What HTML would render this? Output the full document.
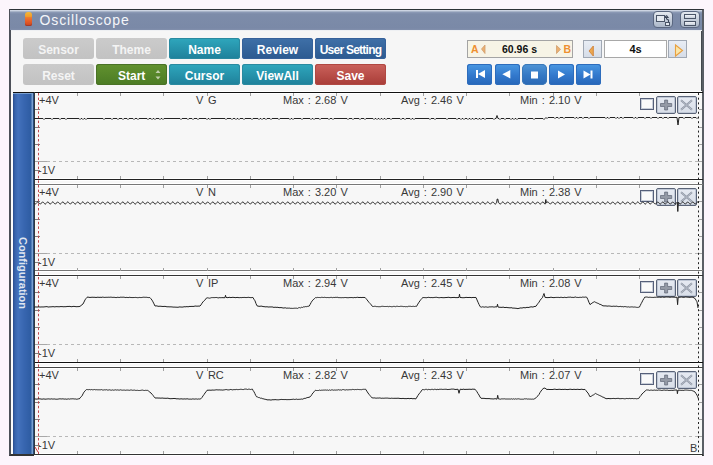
<!DOCTYPE html>
<html><head><meta charset="utf-8">
<style>
html,body{margin:0;padding:0;}
body{width:713px;height:465px;background:#fcf5fc;position:relative;overflow:hidden;font-family:"Liberation Sans",sans-serif;}
.abs{position:absolute;}
#win{position:absolute;left:9px;top:9px;width:695px;height:447px;background:#f6f6f6;box-sizing:border-box;border-top:1px solid #2e3238;border-left:2px solid #4c5058;border-right:2px solid #5a5e66;box-shadow:inset -1px 0 0 #44484e;border-bottom:2px solid #333;}
#title{position:absolute;left:10px;top:10px;width:692px;height:20px;background:linear-gradient(#ccd4e2 0px,#ccd4e2 0.5px,#a8b4c8 1.5px,#8a98b4 2.5px,#7d8ca9 4px,#7a89a7 18px,#8290ac 20px);}
#title .t{position:absolute;left:29.5px;top:2px;font-size:14px;line-height:16px;color:#f4f6fa;letter-spacing:0.9px;}
.btn{position:absolute;width:71px;height:21px;border-radius:3px;color:#fff;font-weight:bold;font-size:12px;line-height:24px;text-align:center;box-sizing:border-box;white-space:nowrap;}
.gray{background:linear-gradient(#cbcbcb,#c2c2c2);color:#f4f4f4;}
.green{background:linear-gradient(#62922f,#4b7b24);box-shadow:inset 0 0 0 1px #4a7226;}
.teal{background:linear-gradient(#2fa7bd,#1e809a);box-shadow:inset 0 0 0 1px #2a8aa0;}
.blue{background:linear-gradient(#3f70a8,#2c5a90);box-shadow:inset 0 0 0 1px #36619a;}
.red{background:linear-gradient(#cb625c,#a83c37);box-shadow:inset 0 0 0 1px #b04842;}
.pb{position:absolute;top:64px;width:25px;height:21px;border-radius:3px;background:linear-gradient(#4a98e2,#3278cc 55%,#2666b8);box-shadow:inset 0 0 0 1px #2d6cbc;}
.pb svg{position:absolute;left:0;top:0;}
.pt{position:absolute;font-size:11px;color:#383838;line-height:13px;white-space:nowrap;word-spacing:1px;}
.cb{position:absolute;left:640px;width:14px;height:12px;box-sizing:border-box;border:1px solid #56607a;background:#fafafa;box-shadow:inset 0 0 0 1px #c8ced8;}
.ib{position:absolute;width:20px;height:18px;box-sizing:border-box;border-radius:2px;border:1px solid #5a6478;background:linear-gradient(#e6eaf2,#d8dee8);box-shadow:inset 0 0 0 1px #c0c8d6;}
.ib svg{position:absolute;left:-1px;top:-1px;}
.hl{position:absolute;left:34px;width:669px;height:1px;}
.wl{position:absolute;left:34px;width:668px;height:1px;background:#fff;}
.sb{position:absolute;width:19px;height:18px;box-sizing:border-box;border:1px solid #a0a8b4;background:linear-gradient(#e8edf5,#d6dde8);}
.sb svg{position:absolute;left:0;top:0;}
.tb{position:absolute;border-radius:4px;border:1px solid #5a6780;box-sizing:border-box;background:linear-gradient(#e4e9f0,#aab6c8);}
</style></head><body>
<div id="win"></div>
<div id="title">
  <div class="abs" style="left:15px;top:6px;width:7px;height:10px;border-radius:1px 1px 2px 2px;background:linear-gradient(#f08830,#e85e28 50%,#c84420);box-shadow:inset 0 -1px 0 #a03a2a;"></div>
  <div class="abs" style="left:15px;top:2px;width:7px;height:5px;border-radius:3px 3px 1px 1px;background:linear-gradient(#f6b838,#f09a28);"></div>
  <div class="t">Oscilloscope</div>
  <div class="tb" style="left:643px;top:1px;width:20px;height:17px;">
    <div class="abs" style="left:2px;top:3px;width:7px;height:5px;border:1px solid #4a5568;background:#e4e9f0;"></div>
    <div class="abs" style="left:11px;top:10px;width:3px;height:2px;border:1px solid #4a5568;background:#e4e9f0;"></div>
    <svg class="abs" style="left:11px;top:3px" width="6" height="7"><path d="M1.5 0.5L0 2.5H3L1.5 0.5M1.5 2.5V3.5Q1.5 4.5 3.5 5V7" stroke="#3a4558" stroke-width="1.1" fill="none"/></svg>
  </div>
  <div class="tb" style="left:670px;top:1px;width:20px;height:17px;">
    <div class="abs" style="left:3px;top:2px;width:10px;height:3px;border:1px solid #4a5568;background:linear-gradient(#f0f3f8,#c8d0dc);"></div>
    <div class="abs" style="left:3px;top:8.5px;width:10px;height:3px;border:1px solid #4a5568;background:linear-gradient(#f0f3f8,#c8d0dc);"></div>
  </div>
</div>
<div class="abs" style="left:11px;top:30px;width:691px;height:1px;background:#eef0f3;"></div>

<div class="btn gray" style="left:23px;top:38px">Sensor</div>
<div class="btn gray" style="left:96px;top:38px">Theme</div>
<div class="btn teal" style="left:169px;top:38px">Name</div>
<div class="btn blue" style="left:242px;top:38px">Review</div>
<div class="btn blue" style="left:315px;top:38px;letter-spacing:-0.75px">User Setting</div>
<div class="btn gray" style="left:23px;top:64px">Reset</div>
<div class="btn green" style="left:96px;top:64px"><span style="position:absolute;left:22px;top:0">Start</span>
  <svg class="abs" style="left:58px;top:4.5px" width="8" height="12"><path d="M1.5 4L4 1L6.5 4ZM1.5 7.5L4 10.5L6.5 7.5Z" fill="#c0ceac"/></svg></div>
<div class="btn teal" style="left:169px;top:64px">Cursor</div>
<div class="btn teal" style="left:242px;top:64px">ViewAll</div>
<div class="btn red" style="left:315px;top:64px">Save</div>

<div class="abs" style="left:467px;top:40px;width:106px;height:18px;box-sizing:border-box;border:1px solid #a4a4a4;background:#f7f4e6;"></div>
<div class="abs" style="left:471px;top:42.5px;font-size:10.5px;line-height:12px;font-weight:bold;color:#ee9030;">A</div>
<svg class="abs" style="left:480px;top:44px" width="7" height="11"><path d="M5 1L1.5 5L5 9.5Z" fill="#ecb070" stroke="#d0a070" stroke-width="0.8"/></svg>
<svg class="abs" style="left:555px;top:44px" width="7" height="11"><path d="M1.5 1.5L5.5 5.3L1.5 9.5Z" fill="#ecb070" stroke="#d0a070" stroke-width="0.8"/></svg>
<div class="abs" style="left:563.5px;top:42.5px;font-size:10.5px;line-height:12px;font-weight:bold;color:#ee9030;">B</div>
<div class="abs" style="left:502px;top:42.5px;font-size:10.5px;line-height:12px;font-weight:bold;color:#111;">60.96 s</div>

<div class="sb" style="left:583px;top:40px;"><svg width="19" height="18"><path d="M9.3 5L5 10L9.3 15Z" fill="#eca850" stroke="#d08038" stroke-width="0.9"/></svg></div>
<div class="abs" style="left:604px;top:40px;width:63px;height:18px;box-sizing:border-box;border:1px solid #a8a8a8;background:#fff;"></div>
<div class="abs" style="left:623px;top:43px;width:25px;text-align:center;font-size:11px;line-height:12px;font-weight:bold;color:#111;">4s</div>
<div class="sb" style="left:668px;top:40px;"><svg width="19" height="18"><path d="M6.5 4L13.5 9.5L6.5 15Z" fill="#fbe6a8" stroke="#e8a040" stroke-width="1.1"/></svg></div>

<div class="pb" style="left:467px"><svg width="26" height="21"><rect x="9" y="6" width="2" height="8" fill="#fff"/><path d="M18 6L11 10L18 14Z" fill="#fff"/></svg></div>
<div class="pb" style="left:495px"><svg width="26" height="21"><path d="M15.3 6L7.3 10.3L15.3 14.5Z" fill="#fff"/></svg></div>
<div class="pb" style="left:522px;border-radius:5px;background:linear-gradient(#4f94d6,#3478c4 55%,#2a68b4);box-shadow:inset 0 0 0 1px #3a78b8;"><svg width="25" height="21"><rect x="9" y="7.5" width="7" height="7" fill="#fff"/></svg></div>
<div class="pb" style="left:549px"><svg width="25" height="21"><path d="M9 6.5L16 10.5L9 14.5Z" fill="#fff"/></svg></div>
<div class="pb" style="left:576px"><svg width="25" height="21"><path d="M7.5 6.5L14.5 10.5L7.5 14.5Z" fill="#fff"/><rect x="14.5" y="6.5" width="2" height="8" fill="#fff"/></svg></div>

<!-- sidebar -->
<div class="abs" style="left:11px;top:93px;width:2px;height:361px;background:#fcfcfc;"></div>
<div class="abs" style="left:13px;top:93px;width:21px;height:361px;background:linear-gradient(90deg,#2a4c8c 0px,#3864ac 2px,#4472bc 5px,#3866b0 11px,#2e5ca2 18px,#7aa0d0 19px,#7aa0d0 20px,#2a4a7a 20px);"></div>
<div class="abs" style="left:13px;top:93px;width:19px;height:1px;background:#7aa0d0;"></div>
<div class="abs" style="left:23px;top:273px;width:0;height:0;">
  <div style="position:absolute;left:-50px;top:-7px;width:100px;text-align:center;transform:rotate(90deg);font-size:11px;font-weight:bold;color:#dfe5f0;line-height:14px;">Configuration</div>
</div>

<!-- chart -->
<div class="abs" style="left:34px;top:92px;width:668px;height:363px;background:#f7f7f7;"></div>
<div class="wl" style="top:91px"></div><div class="wl" style="top:93px"></div><div class="wl" style="top:180px"></div><div class="wl" style="top:178px"></div><div class="wl" style="top:183px"></div><div class="wl" style="top:185px"></div><div class="wl" style="top:271px"></div><div class="wl" style="top:269px"></div><div class="wl" style="top:274px"></div><div class="wl" style="top:276px"></div><div class="wl" style="top:363px"></div><div class="wl" style="top:361px"></div><div class="wl" style="top:366px"></div><div class="wl" style="top:368px"></div><div class="wl" style="top:455px"></div><div class="wl" style="top:453px"></div><div class="hl" style="top:92px;background:#111"></div><div class="hl" style="top:179px;background:#222"></div><div class="hl" style="top:184px;background:#777"></div><div class="hl" style="top:270px;background:#777"></div><div class="hl" style="top:275px;background:#333"></div><div class="hl" style="top:362px;background:#111"></div><div class="hl" style="top:367px;background:#444"></div><div class="hl" style="top:454px;background:#333"></div>
<div class="abs" style="left:13px;top:92px;width:21px;height:1px;background:#111;"></div>
<div class="abs" style="left:34px;top:92px;width:1px;height:363px;background:#303840;"></div>
<svg class="abs" style="left:0;top:0" width="713" height="465">
<line x1="77.5" y1="93" x2="77.5" y2="96" stroke="#a0a0a0"/><line x1="77.5" y1="176" x2="77.5" y2="179" stroke="#a0a0a0"/><line x1="120.5" y1="93" x2="120.5" y2="96" stroke="#a0a0a0"/><line x1="120.5" y1="176" x2="120.5" y2="179" stroke="#a0a0a0"/><line x1="163.5" y1="93" x2="163.5" y2="96" stroke="#a0a0a0"/><line x1="163.5" y1="176" x2="163.5" y2="179" stroke="#a0a0a0"/><line x1="207.5" y1="93" x2="207.5" y2="96" stroke="#a0a0a0"/><line x1="207.5" y1="176" x2="207.5" y2="179" stroke="#a0a0a0"/><line x1="250.5" y1="93" x2="250.5" y2="96" stroke="#a0a0a0"/><line x1="250.5" y1="176" x2="250.5" y2="179" stroke="#a0a0a0"/><line x1="293.5" y1="93" x2="293.5" y2="96" stroke="#a0a0a0"/><line x1="293.5" y1="176" x2="293.5" y2="179" stroke="#a0a0a0"/><line x1="336.5" y1="93" x2="336.5" y2="96" stroke="#a0a0a0"/><line x1="336.5" y1="176" x2="336.5" y2="179" stroke="#a0a0a0"/><line x1="380.5" y1="93" x2="380.5" y2="96" stroke="#a0a0a0"/><line x1="380.5" y1="176" x2="380.5" y2="179" stroke="#a0a0a0"/><line x1="423.5" y1="93" x2="423.5" y2="96" stroke="#a0a0a0"/><line x1="423.5" y1="176" x2="423.5" y2="179" stroke="#a0a0a0"/><line x1="466.5" y1="93" x2="466.5" y2="96" stroke="#a0a0a0"/><line x1="466.5" y1="176" x2="466.5" y2="179" stroke="#a0a0a0"/><line x1="509.5" y1="93" x2="509.5" y2="96" stroke="#a0a0a0"/><line x1="509.5" y1="176" x2="509.5" y2="179" stroke="#a0a0a0"/><line x1="553.5" y1="93" x2="553.5" y2="96" stroke="#a0a0a0"/><line x1="553.5" y1="176" x2="553.5" y2="179" stroke="#a0a0a0"/><line x1="596.5" y1="93" x2="596.5" y2="96" stroke="#a0a0a0"/><line x1="596.5" y1="176" x2="596.5" y2="179" stroke="#a0a0a0"/><line x1="639.5" y1="93" x2="639.5" y2="96" stroke="#a0a0a0"/><line x1="639.5" y1="176" x2="639.5" y2="179" stroke="#a0a0a0"/><line x1="35" y1="109.5" x2="40" y2="109.5" stroke="#808080"/><line x1="699" y1="109.5" x2="702" y2="109.5" stroke="#a0a0a0"/><line x1="35" y1="127.5" x2="40" y2="127.5" stroke="#808080"/><line x1="699" y1="127.5" x2="702" y2="127.5" stroke="#a0a0a0"/><line x1="35" y1="144.5" x2="40" y2="144.5" stroke="#808080"/><line x1="699" y1="144.5" x2="702" y2="144.5" stroke="#a0a0a0"/><line x1="35" y1="170.5" x2="40" y2="170.5" stroke="#808080"/><line x1="35" y1="161.5" x2="47" y2="161.5" stroke="#a8a8a8"/><line x1="47" y1="161.5" x2="698" y2="161.5" stroke="#b8b8b8" stroke-dasharray="3,3"/><line x1="698" y1="161.5" x2="702" y2="161.5" stroke="#a8a8a8"/><line x1="77.5" y1="185" x2="77.5" y2="188" stroke="#a0a0a0"/><line x1="77.5" y1="268" x2="77.5" y2="271" stroke="#a0a0a0"/><line x1="120.5" y1="185" x2="120.5" y2="188" stroke="#a0a0a0"/><line x1="120.5" y1="268" x2="120.5" y2="271" stroke="#a0a0a0"/><line x1="163.5" y1="185" x2="163.5" y2="188" stroke="#a0a0a0"/><line x1="163.5" y1="268" x2="163.5" y2="271" stroke="#a0a0a0"/><line x1="207.5" y1="185" x2="207.5" y2="188" stroke="#a0a0a0"/><line x1="207.5" y1="268" x2="207.5" y2="271" stroke="#a0a0a0"/><line x1="250.5" y1="185" x2="250.5" y2="188" stroke="#a0a0a0"/><line x1="250.5" y1="268" x2="250.5" y2="271" stroke="#a0a0a0"/><line x1="293.5" y1="185" x2="293.5" y2="188" stroke="#a0a0a0"/><line x1="293.5" y1="268" x2="293.5" y2="271" stroke="#a0a0a0"/><line x1="336.5" y1="185" x2="336.5" y2="188" stroke="#a0a0a0"/><line x1="336.5" y1="268" x2="336.5" y2="271" stroke="#a0a0a0"/><line x1="380.5" y1="185" x2="380.5" y2="188" stroke="#a0a0a0"/><line x1="380.5" y1="268" x2="380.5" y2="271" stroke="#a0a0a0"/><line x1="423.5" y1="185" x2="423.5" y2="188" stroke="#a0a0a0"/><line x1="423.5" y1="268" x2="423.5" y2="271" stroke="#a0a0a0"/><line x1="466.5" y1="185" x2="466.5" y2="188" stroke="#a0a0a0"/><line x1="466.5" y1="268" x2="466.5" y2="271" stroke="#a0a0a0"/><line x1="509.5" y1="185" x2="509.5" y2="188" stroke="#a0a0a0"/><line x1="509.5" y1="268" x2="509.5" y2="271" stroke="#a0a0a0"/><line x1="553.5" y1="185" x2="553.5" y2="188" stroke="#a0a0a0"/><line x1="553.5" y1="268" x2="553.5" y2="271" stroke="#a0a0a0"/><line x1="596.5" y1="185" x2="596.5" y2="188" stroke="#a0a0a0"/><line x1="596.5" y1="268" x2="596.5" y2="271" stroke="#a0a0a0"/><line x1="639.5" y1="185" x2="639.5" y2="188" stroke="#a0a0a0"/><line x1="639.5" y1="268" x2="639.5" y2="271" stroke="#a0a0a0"/><line x1="35" y1="201.5" x2="40" y2="201.5" stroke="#808080"/><line x1="699" y1="201.5" x2="702" y2="201.5" stroke="#a0a0a0"/><line x1="35" y1="219.5" x2="40" y2="219.5" stroke="#808080"/><line x1="699" y1="219.5" x2="702" y2="219.5" stroke="#a0a0a0"/><line x1="35" y1="236.5" x2="40" y2="236.5" stroke="#808080"/><line x1="699" y1="236.5" x2="702" y2="236.5" stroke="#a0a0a0"/><line x1="35" y1="262.5" x2="40" y2="262.5" stroke="#808080"/><line x1="35" y1="253.5" x2="47" y2="253.5" stroke="#a8a8a8"/><line x1="47" y1="253.5" x2="698" y2="253.5" stroke="#b8b8b8" stroke-dasharray="3,3"/><line x1="698" y1="253.5" x2="702" y2="253.5" stroke="#a8a8a8"/><line x1="77.5" y1="276" x2="77.5" y2="279" stroke="#a0a0a0"/><line x1="77.5" y1="359" x2="77.5" y2="362" stroke="#a0a0a0"/><line x1="120.5" y1="276" x2="120.5" y2="279" stroke="#a0a0a0"/><line x1="120.5" y1="359" x2="120.5" y2="362" stroke="#a0a0a0"/><line x1="163.5" y1="276" x2="163.5" y2="279" stroke="#a0a0a0"/><line x1="163.5" y1="359" x2="163.5" y2="362" stroke="#a0a0a0"/><line x1="207.5" y1="276" x2="207.5" y2="279" stroke="#a0a0a0"/><line x1="207.5" y1="359" x2="207.5" y2="362" stroke="#a0a0a0"/><line x1="250.5" y1="276" x2="250.5" y2="279" stroke="#a0a0a0"/><line x1="250.5" y1="359" x2="250.5" y2="362" stroke="#a0a0a0"/><line x1="293.5" y1="276" x2="293.5" y2="279" stroke="#a0a0a0"/><line x1="293.5" y1="359" x2="293.5" y2="362" stroke="#a0a0a0"/><line x1="336.5" y1="276" x2="336.5" y2="279" stroke="#a0a0a0"/><line x1="336.5" y1="359" x2="336.5" y2="362" stroke="#a0a0a0"/><line x1="380.5" y1="276" x2="380.5" y2="279" stroke="#a0a0a0"/><line x1="380.5" y1="359" x2="380.5" y2="362" stroke="#a0a0a0"/><line x1="423.5" y1="276" x2="423.5" y2="279" stroke="#a0a0a0"/><line x1="423.5" y1="359" x2="423.5" y2="362" stroke="#a0a0a0"/><line x1="466.5" y1="276" x2="466.5" y2="279" stroke="#a0a0a0"/><line x1="466.5" y1="359" x2="466.5" y2="362" stroke="#a0a0a0"/><line x1="509.5" y1="276" x2="509.5" y2="279" stroke="#a0a0a0"/><line x1="509.5" y1="359" x2="509.5" y2="362" stroke="#a0a0a0"/><line x1="553.5" y1="276" x2="553.5" y2="279" stroke="#a0a0a0"/><line x1="553.5" y1="359" x2="553.5" y2="362" stroke="#a0a0a0"/><line x1="596.5" y1="276" x2="596.5" y2="279" stroke="#a0a0a0"/><line x1="596.5" y1="359" x2="596.5" y2="362" stroke="#a0a0a0"/><line x1="639.5" y1="276" x2="639.5" y2="279" stroke="#a0a0a0"/><line x1="639.5" y1="359" x2="639.5" y2="362" stroke="#a0a0a0"/><line x1="35" y1="292.5" x2="40" y2="292.5" stroke="#808080"/><line x1="699" y1="292.5" x2="702" y2="292.5" stroke="#a0a0a0"/><line x1="35" y1="310.5" x2="40" y2="310.5" stroke="#808080"/><line x1="699" y1="310.5" x2="702" y2="310.5" stroke="#a0a0a0"/><line x1="35" y1="327.5" x2="40" y2="327.5" stroke="#808080"/><line x1="699" y1="327.5" x2="702" y2="327.5" stroke="#a0a0a0"/><line x1="35" y1="353.5" x2="40" y2="353.5" stroke="#808080"/><line x1="35" y1="344.5" x2="47" y2="344.5" stroke="#a8a8a8"/><line x1="47" y1="344.5" x2="698" y2="344.5" stroke="#b8b8b8" stroke-dasharray="3,3"/><line x1="698" y1="344.5" x2="702" y2="344.5" stroke="#a8a8a8"/><line x1="77.5" y1="368" x2="77.5" y2="371" stroke="#a0a0a0"/><line x1="77.5" y1="451" x2="77.5" y2="454" stroke="#a0a0a0"/><line x1="120.5" y1="368" x2="120.5" y2="371" stroke="#a0a0a0"/><line x1="120.5" y1="451" x2="120.5" y2="454" stroke="#a0a0a0"/><line x1="163.5" y1="368" x2="163.5" y2="371" stroke="#a0a0a0"/><line x1="163.5" y1="451" x2="163.5" y2="454" stroke="#a0a0a0"/><line x1="207.5" y1="368" x2="207.5" y2="371" stroke="#a0a0a0"/><line x1="207.5" y1="451" x2="207.5" y2="454" stroke="#a0a0a0"/><line x1="250.5" y1="368" x2="250.5" y2="371" stroke="#a0a0a0"/><line x1="250.5" y1="451" x2="250.5" y2="454" stroke="#a0a0a0"/><line x1="293.5" y1="368" x2="293.5" y2="371" stroke="#a0a0a0"/><line x1="293.5" y1="451" x2="293.5" y2="454" stroke="#a0a0a0"/><line x1="336.5" y1="368" x2="336.5" y2="371" stroke="#a0a0a0"/><line x1="336.5" y1="451" x2="336.5" y2="454" stroke="#a0a0a0"/><line x1="380.5" y1="368" x2="380.5" y2="371" stroke="#a0a0a0"/><line x1="380.5" y1="451" x2="380.5" y2="454" stroke="#a0a0a0"/><line x1="423.5" y1="368" x2="423.5" y2="371" stroke="#a0a0a0"/><line x1="423.5" y1="451" x2="423.5" y2="454" stroke="#a0a0a0"/><line x1="466.5" y1="368" x2="466.5" y2="371" stroke="#a0a0a0"/><line x1="466.5" y1="451" x2="466.5" y2="454" stroke="#a0a0a0"/><line x1="509.5" y1="368" x2="509.5" y2="371" stroke="#a0a0a0"/><line x1="509.5" y1="451" x2="509.5" y2="454" stroke="#a0a0a0"/><line x1="553.5" y1="368" x2="553.5" y2="371" stroke="#a0a0a0"/><line x1="553.5" y1="451" x2="553.5" y2="454" stroke="#a0a0a0"/><line x1="596.5" y1="368" x2="596.5" y2="371" stroke="#a0a0a0"/><line x1="596.5" y1="451" x2="596.5" y2="454" stroke="#a0a0a0"/><line x1="639.5" y1="368" x2="639.5" y2="371" stroke="#a0a0a0"/><line x1="639.5" y1="451" x2="639.5" y2="454" stroke="#a0a0a0"/><line x1="35" y1="384.5" x2="40" y2="384.5" stroke="#808080"/><line x1="699" y1="384.5" x2="702" y2="384.5" stroke="#a0a0a0"/><line x1="35" y1="402.5" x2="40" y2="402.5" stroke="#808080"/><line x1="699" y1="402.5" x2="702" y2="402.5" stroke="#a0a0a0"/><line x1="35" y1="419.5" x2="40" y2="419.5" stroke="#808080"/><line x1="699" y1="419.5" x2="702" y2="419.5" stroke="#a0a0a0"/><line x1="35" y1="445.5" x2="40" y2="445.5" stroke="#808080"/><line x1="35" y1="436.5" x2="47" y2="436.5" stroke="#a8a8a8"/><line x1="47" y1="436.5" x2="698" y2="436.5" stroke="#b8b8b8" stroke-dasharray="3,3"/><line x1="698" y1="436.5" x2="702" y2="436.5" stroke="#a8a8a8"/>
</svg>

<div class="pt" style="top:94px;left:196px;word-spacing:1.5px">V G</div>
<div class="pt" style="top:94px;left:283px">Max : 2.68 V</div>
<div class="pt" style="top:94px;left:401px">Avg : 2.46 V</div>
<div class="pt" style="top:94px;left:520px">Min : 2.10 V</div>
<div class="pt" style="top:94px;left:39px;word-spacing:0">+4V</div>
<div class="pt" style="top:164px;left:38px;word-spacing:0">-1V</div>
<div class="cb" style="top:98px"></div>
<div class="ib" style="top:96px;left:656px"><svg width="20" height="18" viewBox="0 0 20 18"><path d="M8.6 4.1h3v3.4h4.1v3h-4.1v3.5h-3v-3.5h-4.1v-3h4.1z" fill="#949aa6" stroke="#5e6676" stroke-width="0.7"/></svg></div>
<div class="ib" style="top:96px;left:677px"><svg width="20" height="18" viewBox="0 0 20 18"><path d="M4 4.3L15 13.8M15 4.3L4 13.8" stroke="#8a92a0" stroke-width="1.8"/><path d="M4 4.3L15 13.8M15 4.3L4 13.8" stroke="#c4cad4" stroke-width="0.7"/></svg></div>

<div class="pt" style="top:186px;left:196px;word-spacing:1.5px">V N</div>
<div class="pt" style="top:186px;left:283px">Max : 3.20 V</div>
<div class="pt" style="top:186px;left:401px">Avg : 2.90 V</div>
<div class="pt" style="top:186px;left:520px">Min : 2.38 V</div>
<div class="pt" style="top:186px;left:39px;word-spacing:0">+4V</div>
<div class="pt" style="top:256px;left:38px;word-spacing:0">-1V</div>
<div class="cb" style="top:190px"></div>
<div class="ib" style="top:188px;left:656px"><svg width="20" height="18" viewBox="0 0 20 18"><path d="M8.6 4.1h3v3.4h4.1v3h-4.1v3.5h-3v-3.5h-4.1v-3h4.1z" fill="#949aa6" stroke="#5e6676" stroke-width="0.7"/></svg></div>
<div class="ib" style="top:188px;left:677px"><svg width="20" height="18" viewBox="0 0 20 18"><path d="M4 4.3L15 13.8M15 4.3L4 13.8" stroke="#8a92a0" stroke-width="1.8"/><path d="M4 4.3L15 13.8M15 4.3L4 13.8" stroke="#c4cad4" stroke-width="0.7"/></svg></div>

<div class="pt" style="top:277px;left:196px;word-spacing:1.5px">V IP</div>
<div class="pt" style="top:277px;left:283px">Max : 2.94 V</div>
<div class="pt" style="top:277px;left:401px">Avg : 2.45 V</div>
<div class="pt" style="top:277px;left:520px">Min : 2.08 V</div>
<div class="pt" style="top:277px;left:39px;word-spacing:0">+4V</div>
<div class="pt" style="top:347px;left:38px;word-spacing:0">-1V</div>
<div class="cb" style="top:281px"></div>
<div class="ib" style="top:279px;left:656px"><svg width="20" height="18" viewBox="0 0 20 18"><path d="M8.6 4.1h3v3.4h4.1v3h-4.1v3.5h-3v-3.5h-4.1v-3h4.1z" fill="#949aa6" stroke="#5e6676" stroke-width="0.7"/></svg></div>
<div class="ib" style="top:279px;left:677px"><svg width="20" height="18" viewBox="0 0 20 18"><path d="M4 4.3L15 13.8M15 4.3L4 13.8" stroke="#8a92a0" stroke-width="1.8"/><path d="M4 4.3L15 13.8M15 4.3L4 13.8" stroke="#c4cad4" stroke-width="0.7"/></svg></div>

<div class="pt" style="top:369px;left:196px;word-spacing:1.5px">V RC</div>
<div class="pt" style="top:369px;left:283px">Max : 2.82 V</div>
<div class="pt" style="top:369px;left:401px">Avg : 2.43 V</div>
<div class="pt" style="top:369px;left:520px">Min : 2.07 V</div>
<div class="pt" style="top:369px;left:39px;word-spacing:0">+4V</div>
<div class="pt" style="top:439px;left:38px;word-spacing:0">-1V</div>
<div class="cb" style="top:373px"></div>
<div class="ib" style="top:371px;left:656px"><svg width="20" height="18" viewBox="0 0 20 18"><path d="M8.6 4.1h3v3.4h4.1v3h-4.1v3.5h-3v-3.5h-4.1v-3h4.1z" fill="#949aa6" stroke="#5e6676" stroke-width="0.7"/></svg></div>
<div class="ib" style="top:371px;left:677px"><svg width="20" height="18" viewBox="0 0 20 18"><path d="M4 4.3L15 13.8M15 4.3L4 13.8" stroke="#8a92a0" stroke-width="1.8"/><path d="M4 4.3L15 13.8M15 4.3L4 13.8" stroke="#c4cad4" stroke-width="0.7"/></svg></div>

<svg class="abs" style="left:0;top:0" width="713" height="465">
<line x1="38.5" y1="93" x2="38.5" y2="454" stroke="#c04850" stroke-dasharray="2.5,2.1"/>
<line x1="698.5" y1="93" x2="698.5" y2="454" stroke="#222" stroke-dasharray="2,2.7"/>
<path d="M34.0,118.5 L35.0,118.5 L36.0,118.5 L37.0,118.5 L38.0,118.5 L39.0,118.5 L40.0,118.5 L41.0,118.5 L42.0,118.5 L43.0,118.5 L44.0,119.5 L45.0,118.5 L46.0,118.5 L47.0,118.5 L48.0,118.5 L49.0,118.5 L50.0,118.5 L51.0,118.5 L52.0,119.5 L53.0,118.5 L54.0,118.5 L55.0,118.5 L56.0,118.5 L57.0,118.5 L58.0,118.5 L59.0,118.5 L60.0,119.5 L61.0,118.5 L62.0,118.5 L63.0,118.5 L64.0,118.5 L65.0,118.5 L66.0,119.5 L67.0,118.5 L68.0,118.5 L69.0,118.5 L70.0,118.5 L71.0,118.5 L72.0,118.5 L73.0,118.5 L74.0,118.5 L75.0,118.5 L76.0,118.5 L77.0,118.5 L78.0,118.5 L79.0,118.5 L80.0,119.5 L81.0,118.5 L82.0,118.5 L83.0,119.5 L84.0,118.5 L85.0,118.5 L86.0,119.5 L87.0,118.5 L88.0,118.5 L89.0,118.5 L90.0,118.5 L91.0,118.5 L92.0,118.5 L93.0,118.5 L94.0,118.5 L95.0,118.5 L96.0,118.5 L97.0,118.5 L98.0,118.5 L99.0,118.5 L100.0,118.5 L101.0,118.5 L102.0,118.5 L103.0,118.5 L104.0,119.5 L105.0,118.5 L106.0,118.5 L107.0,118.5 L108.0,118.5 L109.0,118.5 L110.0,118.5 L111.0,118.5 L112.0,119.5 L113.0,118.5 L114.0,118.5 L115.0,118.5 L116.0,118.5 L117.0,118.5 L118.0,119.5 L119.0,118.5 L120.0,118.5 L121.0,118.5 L122.0,118.5 L123.0,119.5 L124.0,118.5 L125.0,118.5 L126.0,118.5 L127.0,118.5 L128.0,119.5 L129.0,118.5 L130.0,118.5 L131.0,118.5 L132.0,118.5 L133.0,118.5 L134.0,119.5 L135.0,118.5 L136.0,118.5 L137.0,118.5 L138.0,119.5 L139.0,118.5 L140.0,118.5 L141.0,118.5 L142.0,118.5 L143.0,118.5 L144.0,118.5 L145.0,118.5 L146.0,118.5 L147.0,118.5 L148.0,119.5 L149.0,118.5 L150.0,118.5 L151.0,118.5 L152.0,119.5 L153.0,118.5 L154.0,118.5 L155.0,119.5 L156.0,118.5 L157.0,118.5 L158.0,118.5 L159.0,118.5 L160.0,119.5 L161.0,118.5 L162.0,118.5 L163.0,119.5 L164.0,118.5 L165.0,118.5 L166.0,118.5 L167.0,118.5 L168.0,118.5 L169.0,118.5 L170.0,118.5 L171.0,118.5 L172.0,118.5 L173.0,118.5 L174.0,118.5 L175.0,118.5 L176.0,118.5 L177.0,118.5 L178.0,118.5 L179.0,118.5 L180.0,118.5 L181.0,119.5 L182.0,118.5 L183.0,118.5 L184.0,118.5 L185.0,118.5 L186.0,118.5 L187.0,118.5 L188.0,119.5 L189.0,118.5 L190.0,118.5 L191.0,118.5 L192.0,118.5 L193.0,119.5 L194.0,118.5 L195.0,118.5 L196.0,118.5 L197.0,118.5 L198.0,119.5 L199.0,118.5 L200.0,118.5 L201.0,118.5 L202.0,118.5 L203.0,118.5 L204.0,118.5 L205.0,118.5 L206.0,118.5 L207.0,119.5 L208.0,118.5 L209.0,118.5 L210.0,119.5 L211.0,118.5 L212.0,118.5 L213.0,118.5 L214.0,118.5 L215.0,118.5 L216.0,118.5 L217.0,118.5 L218.0,118.5 L219.0,118.5 L220.0,118.5 L221.0,118.5 L222.0,118.5 L223.0,118.5 L224.0,118.5 L225.0,118.5 L226.0,119.5 L227.0,118.5 L228.0,118.5 L229.0,118.5 L230.0,118.5 L231.0,118.5 L232.0,119.5 L233.0,118.5 L234.0,118.5 L235.0,118.5 L236.0,119.5 L237.0,118.5 L238.0,118.5 L239.0,119.5 L240.0,118.5 L241.0,118.5 L242.0,118.5 L243.0,118.5 L244.0,119.5 L245.0,118.5 L246.0,118.5 L247.0,118.5 L248.0,118.5 L249.0,118.5 L250.0,118.5 L251.0,118.5 L252.0,119.5 L253.0,118.5 L254.0,118.5 L255.0,118.5 L256.0,118.5 L257.0,118.5 L258.0,118.5 L259.0,119.5 L260.0,118.5 L261.0,118.5 L262.0,119.5 L263.0,118.5 L264.0,118.5 L265.0,118.5 L266.0,119.5 L267.0,118.5 L268.0,118.5 L269.0,118.5 L270.0,118.5 L271.0,119.5 L272.0,118.5 L273.0,118.5 L274.0,118.5 L275.0,118.5 L276.0,118.5 L277.0,118.5 L278.0,118.5 L279.0,119.5 L280.0,118.5 L281.0,118.5 L282.0,118.5 L283.0,118.5 L284.0,118.5 L285.0,118.5 L286.0,118.5 L287.0,118.5 L288.0,118.5 L289.0,118.5 L290.0,119.5 L291.0,118.5 L292.0,118.5 L293.0,119.5 L294.0,118.5 L295.0,118.5 L296.0,118.5 L297.0,118.5 L298.0,118.5 L299.0,118.5 L300.0,118.5 L301.0,118.5 L302.0,119.5 L303.0,118.5 L304.0,118.5 L305.0,118.5 L306.0,118.5 L307.0,118.5 L308.0,118.5 L309.0,118.5 L310.0,118.5 L311.0,119.5 L312.0,118.5 L313.0,118.5 L314.0,119.5 L315.0,118.5 L316.0,118.5 L317.0,118.5 L318.0,118.5 L319.0,118.5 L320.0,119.5 L321.0,118.5 L322.0,118.5 L323.0,118.5 L324.0,118.5 L325.0,118.5 L326.0,118.5 L327.0,118.5 L328.0,118.5 L329.0,119.5 L330.0,118.5 L331.0,118.5 L332.0,118.5 L333.0,119.5 L334.0,118.5 L335.0,118.5 L336.0,118.5 L337.0,118.5 L338.0,118.5 L339.0,118.5 L340.0,118.5 L341.0,118.5 L342.0,118.5 L343.0,118.5 L344.0,118.5 L345.0,118.5 L346.0,118.5 L347.0,118.5 L348.0,119.5 L349.0,118.5 L350.0,118.5 L351.0,118.5 L352.0,118.5 L353.0,119.5 L354.0,118.5 L355.0,118.5 L356.0,118.5 L357.0,118.5 L358.0,118.5 L359.0,118.5 L360.0,119.5 L361.0,118.5 L362.0,118.5 L363.0,118.5 L364.0,118.5 L365.0,119.5 L366.0,118.5 L367.0,118.5 L368.0,118.5 L369.0,118.5 L370.0,118.5 L371.0,118.5 L372.0,118.5 L373.0,118.5 L374.0,119.5 L375.0,118.5 L376.0,118.5 L377.0,119.5 L378.0,118.5 L379.0,118.5 L380.0,119.5 L381.0,118.5 L382.0,118.5 L383.0,119.5 L384.0,118.5 L385.0,118.5 L386.0,119.5 L387.0,118.5 L388.0,118.5 L389.0,118.5 L390.0,118.5 L391.0,119.5 L392.0,118.5 L393.0,118.5 L394.0,118.5 L395.0,118.5 L396.0,118.5 L397.0,118.5 L398.0,118.5 L399.0,118.5 L400.0,118.5 L401.0,119.5 L402.0,118.5 L403.0,118.5 L404.0,118.5 L405.0,119.5 L406.0,118.5 L407.0,118.5 L408.0,118.5 L409.0,118.5 L410.0,118.5 L411.0,119.5 L412.0,118.5 L413.0,118.5 L414.0,119.5 L415.0,118.5 L416.0,118.5 L417.0,118.5 L418.0,118.5 L419.0,118.5 L420.0,118.5 L421.0,118.5 L422.0,118.5 L423.0,118.5 L424.0,118.5 L425.0,118.5 L426.0,118.5 L427.0,118.5 L428.0,118.5 L429.0,118.5 L430.0,119.5 L431.0,118.5 L432.0,118.5 L433.0,118.5 L434.0,118.5 L435.0,119.5 L436.0,118.5 L437.0,118.5 L438.0,118.5 L439.0,118.5 L440.0,118.5 L441.0,118.5 L442.0,118.5 L443.0,118.5 L444.0,118.5 L445.0,118.5 L446.0,118.5 L447.0,119.5 L448.0,118.5 L449.0,118.5 L450.0,118.5 L451.0,118.5 L452.0,118.5 L453.0,118.5 L454.0,118.5 L455.0,118.5 L456.0,118.5 L457.0,119.5 L458.0,118.5 L459.0,118.5 L460.0,118.5 L461.0,119.5 L462.0,118.5 L463.0,118.5 L464.0,119.5 L465.0,118.5 L466.0,118.5 L467.0,118.5 L468.0,119.5 L469.0,118.5 L470.0,118.5 L471.0,119.5 L472.0,118.5 L473.0,118.5 L474.0,119.5 L475.0,118.5 L476.0,118.5 L477.0,118.5 L478.0,119.5 L479.0,118.5 L480.0,118.5 L481.0,119.5 L482.0,118.5 L483.0,118.5 L484.0,118.5 L485.0,119.5 L486.0,118.5 L487.0,118.5 L488.0,118.5 L489.0,118.5 L490.0,118.5 L491.0,118.5 L492.0,118.5 L493.0,118.5 L494.0,119.5 L495.0,118.5 L496.0,118.5 L497.0,115.5 L498.0,118.5 L499.0,118.5 L500.0,119.5 L501.0,118.5 L502.0,118.5 L503.0,118.5 L504.0,118.5 L505.0,119.5 L506.0,118.5 L507.0,118.5 L508.0,118.5 L509.0,118.5 L510.0,118.5 L511.0,119.5 L512.0,118.5 L513.0,118.5 L514.0,119.5 L515.0,118.5 L516.0,118.5 L517.0,119.5 L518.0,118.5 L519.0,118.5 L520.0,118.5 L521.0,118.5 L522.0,118.5 L523.0,118.5 L524.0,118.5 L525.0,118.5 L526.0,118.5 L527.0,119.5 L528.0,118.5 L529.0,118.5 L530.0,118.5 L531.0,118.5 L532.0,118.5 L533.0,118.5 L534.0,119.5 L535.0,118.5 L536.0,118.5 L537.0,118.5 L538.0,118.5 L539.0,118.5 L540.0,118.5 L541.0,118.5 L542.0,118.5 L543.0,118.5 L544.0,119.5 L545.0,118.5 L546.0,117.5 L547.0,118.5 L548.0,117.5 L549.0,117.5 L550.0,117.5 L551.0,117.5 L552.0,117.5 L553.0,117.5 L554.0,117.5 L555.0,118.5 L556.0,117.5 L557.0,117.5 L558.0,117.5 L559.0,118.5 L560.0,117.5 L561.0,117.5 L562.0,117.5 L563.0,117.5 L564.0,118.5 L565.0,117.5 L566.0,117.5 L567.0,117.5 L568.0,117.5 L569.0,117.5 L570.0,117.5 L571.0,117.5 L572.0,117.5 L573.0,117.5 L574.0,117.5 L575.0,118.5 L576.0,117.5 L577.0,117.5 L578.0,118.5 L579.0,117.5 L580.0,117.5 L581.0,117.5 L582.0,117.5 L583.0,118.5 L584.0,117.5 L585.0,117.5 L586.0,117.5 L587.0,117.5 L588.0,117.5 L589.0,118.5 L590.0,117.5 L591.0,117.5 L592.0,117.5 L593.0,117.5 L594.0,117.5 L595.0,117.5 L596.0,117.5 L597.0,117.5 L598.0,117.5 L599.0,117.5 L600.0,117.5 L601.0,117.5 L602.0,117.5 L603.0,117.5 L604.0,117.5 L605.0,117.5 L606.0,118.5 L607.0,117.5 L608.0,117.5 L609.0,118.5 L610.0,117.5 L611.0,117.5 L612.0,117.5 L613.0,117.5 L614.0,117.5 L615.0,117.5 L616.0,118.5 L617.0,117.5 L618.0,117.5 L619.0,118.5 L620.0,117.5 L621.0,117.5 L622.0,117.5 L623.0,118.5 L624.0,117.5 L625.0,117.5 L626.0,117.5 L627.0,117.5 L628.0,117.5 L629.0,117.5 L630.0,117.5 L631.0,117.5 L632.0,117.5 L633.0,117.5 L634.0,118.5 L635.0,117.5 L636.0,117.5 L637.0,118.5 L638.0,117.5 L639.0,117.5 L640.0,117.5 L641.0,117.5 L642.0,117.5 L643.0,117.5 L644.0,117.5 L645.0,118.5 L646.0,117.5 L647.0,117.5 L648.0,117.5 L649.0,117.5 L650.0,117.5 L651.0,118.5 L652.0,117.5 L653.0,117.5 L654.0,117.5 L655.0,117.5 L656.0,117.5 L657.0,117.5 L658.0,118.5 L659.0,117.5 L660.0,117.5 L661.0,117.5 L662.0,117.5 L663.0,118.5 L664.0,117.5 L665.0,117.5 L666.0,117.5 L667.0,117.5 L668.0,118.5 L669.0,117.5 L670.0,117.5 L671.0,117.5 L672.0,117.5 L673.0,117.5 L674.0,117.5 L675.0,117.5 L676.0,117.5 L677.0,117.5 L678.0,125.0 L679.0,117.5 L680.0,117.5 L681.0,117.5 L682.0,117.5 L683.0,117.5 L684.0,118.5 L685.0,117.5 L686.0,117.5 L687.0,117.5 L688.0,117.5 L689.0,117.5 L690.0,117.5 L691.0,117.5 L692.0,118.5 L693.0,117.5 L694.0,117.5 L695.0,117.5 L696.0,117.5 L697.0,118.5 L698.0,117.5" fill="none" stroke="#222" stroke-width="1"/><path d="M34.0,203.0 L34.6,203.8 L35.2,204.1 L35.8,203.8 L36.4,203.1 L37.0,202.4 L37.6,201.9 L38.2,202.1 L38.8,202.7 L39.4,203.5 L40.0,204.0 L40.6,204.0 L41.2,203.4 L41.8,202.6 L42.4,202.0 L43.0,202.0 L43.6,202.5 L44.2,203.3 L44.8,203.9 L45.4,204.1 L46.0,203.6 L46.6,202.9 L47.2,202.2 L47.8,201.9 L48.4,202.2 L49.0,203.0 L49.6,203.8 L50.2,204.1 L50.8,203.8 L51.4,203.1 L52.0,202.4 L52.6,201.9 L53.2,202.1 L53.8,202.7 L54.4,203.5 L55.0,204.0 L55.6,204.0 L56.2,203.4 L56.8,202.6 L57.4,202.0 L58.0,202.0 L58.6,202.5 L59.2,203.3 L59.8,203.9 L60.4,204.1 L61.0,203.6 L61.6,202.9 L62.2,202.2 L62.8,201.9 L63.4,202.2 L64.0,203.0 L64.6,203.8 L65.2,204.1 L65.8,203.8 L66.4,203.1 L67.0,202.4 L67.6,201.9 L68.2,202.1 L68.8,202.7 L69.4,203.5 L70.0,204.0 L70.6,204.0 L71.2,203.4 L71.8,202.6 L72.4,202.0 L73.0,202.0 L73.6,202.5 L74.2,203.3 L74.8,203.9 L75.4,204.1 L76.0,203.6 L76.6,202.9 L77.2,202.2 L77.8,201.9 L78.4,202.2 L79.0,203.0 L79.6,203.8 L80.2,204.1 L80.8,203.8 L81.4,203.1 L82.0,202.4 L82.6,201.9 L83.2,202.1 L83.8,202.7 L84.4,203.5 L85.0,204.0 L85.6,204.0 L86.2,203.4 L86.8,202.6 L87.4,202.0 L88.0,202.0 L88.6,202.5 L89.2,203.3 L89.8,203.9 L90.4,204.1 L91.0,203.6 L91.6,202.9 L92.2,202.2 L92.8,201.9 L93.4,202.2 L94.0,203.0 L94.6,203.8 L95.2,204.1 L95.8,203.8 L96.4,203.1 L97.0,202.4 L97.6,201.9 L98.2,202.1 L98.8,202.7 L99.4,203.5 L100.0,204.0 L100.6,204.0 L101.2,203.4 L101.8,202.6 L102.4,202.0 L103.0,202.0 L103.6,202.5 L104.2,203.3 L104.8,203.9 L105.4,204.1 L106.0,203.6 L106.6,202.9 L107.2,202.2 L107.8,201.9 L108.4,202.2 L109.0,203.0 L109.6,203.8 L110.2,204.1 L110.8,203.8 L111.4,203.1 L112.0,202.4 L112.6,201.9 L113.2,202.1 L113.8,202.7 L114.4,203.5 L115.0,204.0 L115.6,204.0 L116.2,203.4 L116.8,202.6 L117.4,202.0 L118.0,202.0 L118.6,202.5 L119.2,203.3 L119.8,203.9 L120.4,204.1 L121.0,203.6 L121.6,202.9 L122.2,202.2 L122.8,201.9 L123.4,202.2 L124.0,203.0 L124.6,203.8 L125.2,204.1 L125.8,203.8 L126.4,203.1 L127.0,202.4 L127.6,201.9 L128.2,202.1 L128.8,202.7 L129.4,203.5 L130.0,204.0 L130.6,204.0 L131.2,203.4 L131.8,202.6 L132.4,202.0 L133.0,202.0 L133.6,202.5 L134.2,203.3 L134.8,203.9 L135.4,204.1 L136.0,203.6 L136.6,202.9 L137.2,202.2 L137.8,201.9 L138.4,202.2 L139.0,203.0 L139.6,203.8 L140.2,204.1 L140.8,203.8 L141.4,203.1 L142.0,202.4 L142.6,201.9 L143.2,202.1 L143.8,202.7 L144.4,203.5 L145.0,204.0 L145.6,204.0 L146.2,203.4 L146.8,202.6 L147.4,202.0 L148.0,202.0 L148.6,202.5 L149.2,203.3 L149.8,203.9 L150.4,204.1 L151.0,203.6 L151.6,202.9 L152.2,202.2 L152.8,201.9 L153.4,202.2 L154.0,203.0 L154.6,203.8 L155.2,204.1 L155.8,203.8 L156.4,203.1 L157.0,202.4 L157.6,201.9 L158.2,202.1 L158.8,202.7 L159.4,203.5 L160.0,204.0 L160.6,204.0 L161.2,203.4 L161.8,202.6 L162.4,202.0 L163.0,202.0 L163.6,202.5 L164.2,203.3 L164.8,203.9 L165.4,204.1 L166.0,203.6 L166.6,202.9 L167.2,202.2 L167.8,201.9 L168.4,202.2 L169.0,203.0 L169.6,203.8 L170.2,204.1 L170.8,203.8 L171.4,203.1 L172.0,202.4 L172.6,201.9 L173.2,202.1 L173.8,202.7 L174.4,203.5 L175.0,204.0 L175.6,204.0 L176.2,203.4 L176.8,202.6 L177.4,202.0 L178.0,202.0 L178.6,202.5 L179.2,203.3 L179.8,203.9 L180.4,204.1 L181.0,203.6 L181.6,202.9 L182.2,202.2 L182.8,201.9 L183.4,202.2 L184.0,203.0 L184.6,203.8 L185.2,204.1 L185.8,203.8 L186.4,203.1 L187.0,202.4 L187.6,201.9 L188.2,202.1 L188.8,202.7 L189.4,203.5 L190.0,204.0 L190.6,204.0 L191.2,203.4 L191.8,202.6 L192.4,202.0 L193.0,202.0 L193.6,202.5 L194.2,203.3 L194.8,203.9 L195.4,204.1 L196.0,203.6 L196.6,202.9 L197.2,202.2 L197.8,201.9 L198.4,202.2 L199.0,203.0 L199.6,203.8 L200.2,204.1 L200.8,203.8 L201.4,203.1 L202.0,202.4 L202.6,201.9 L203.2,202.1 L203.8,202.7 L204.4,203.5 L205.0,204.0 L205.6,204.0 L206.2,203.4 L206.8,202.6 L207.4,202.0 L208.0,202.0 L208.6,202.5 L209.2,203.3 L209.8,203.9 L210.4,204.1 L211.0,203.6 L211.6,202.9 L212.2,202.2 L212.8,201.9 L213.4,202.2 L214.0,203.0 L214.6,203.8 L215.2,204.1 L215.8,203.8 L216.4,203.1 L217.0,202.4 L217.6,201.9 L218.2,202.1 L218.8,202.7 L219.4,203.5 L220.0,204.0 L220.6,204.0 L221.2,203.4 L221.8,202.6 L222.4,202.0 L223.0,202.0 L223.6,202.5 L224.2,203.3 L224.8,203.9 L225.4,204.1 L226.0,203.6 L226.6,202.9 L227.2,202.2 L227.8,201.9 L228.4,202.2 L229.0,203.0 L229.6,203.8 L230.2,204.1 L230.8,203.8 L231.4,203.1 L232.0,202.4 L232.6,201.9 L233.2,202.1 L233.8,202.7 L234.4,203.5 L235.0,204.0 L235.6,204.0 L236.2,203.4 L236.8,202.6 L237.4,202.0 L238.0,202.0 L238.6,202.5 L239.2,203.3 L239.8,203.9 L240.4,204.1 L241.0,203.6 L241.6,202.9 L242.2,202.2 L242.8,201.9 L243.4,202.2 L244.0,203.0 L244.6,203.8 L245.2,204.1 L245.8,203.8 L246.4,203.1 L247.0,202.4 L247.6,201.9 L248.2,202.1 L248.8,202.7 L249.4,203.5 L250.0,204.0 L250.6,204.0 L251.2,203.4 L251.8,202.6 L252.4,202.0 L253.0,202.0 L253.6,202.5 L254.2,203.3 L254.8,203.9 L255.4,204.1 L256.0,203.6 L256.6,202.9 L257.2,202.2 L257.8,201.9 L258.4,202.2 L259.0,203.0 L259.6,203.8 L260.2,204.1 L260.8,203.8 L261.4,203.1 L262.0,202.4 L262.6,201.9 L263.2,202.1 L263.8,202.7 L264.4,203.5 L265.0,204.0 L265.6,204.0 L266.2,203.4 L266.8,202.6 L267.4,202.0 L268.0,202.0 L268.6,202.5 L269.2,203.3 L269.8,203.9 L270.4,204.1 L271.0,203.6 L271.6,202.9 L272.2,202.2 L272.8,201.9 L273.4,202.2 L274.0,203.0 L274.6,203.8 L275.2,204.1 L275.8,203.8 L276.4,203.1 L277.0,202.4 L277.6,201.9 L278.2,202.1 L278.8,202.7 L279.4,203.5 L280.0,204.0 L280.6,204.0 L281.2,203.4 L281.8,202.6 L282.4,202.0 L283.0,202.0 L283.6,202.5 L284.2,203.3 L284.8,203.9 L285.4,204.1 L286.0,203.6 L286.6,202.9 L287.2,202.2 L287.8,201.9 L288.4,202.2 L289.0,203.0 L289.6,203.8 L290.2,204.1 L290.8,203.8 L291.4,203.1 L292.0,202.4 L292.6,201.9 L293.2,202.1 L293.8,202.7 L294.4,203.5 L295.0,204.0 L295.6,204.0 L296.2,203.4 L296.8,202.6 L297.4,202.0 L298.0,202.0 L298.6,202.5 L299.2,203.3 L299.8,203.9 L300.4,204.1 L301.0,203.6 L301.6,202.9 L302.2,202.2 L302.8,201.9 L303.4,202.2 L304.0,203.0 L304.6,203.8 L305.2,204.1 L305.8,203.8 L306.4,203.1 L307.0,202.4 L307.6,201.9 L308.2,202.1 L308.8,202.7 L309.4,203.5 L310.0,204.0 L310.6,204.0 L311.2,203.4 L311.8,202.6 L312.4,202.0 L313.0,202.0 L313.6,202.5 L314.2,203.3 L314.8,203.9 L315.4,204.1 L316.0,203.6 L316.6,202.9 L317.2,202.2 L317.8,201.9 L318.4,202.2 L319.0,203.0 L319.6,203.8 L320.2,204.1 L320.8,203.8 L321.4,203.1 L322.0,202.4 L322.6,201.9 L323.2,202.1 L323.8,202.7 L324.4,203.5 L325.0,204.0 L325.6,204.0 L326.2,203.4 L326.8,202.6 L327.4,202.0 L328.0,202.0 L328.6,202.5 L329.2,203.3 L329.8,203.9 L330.4,204.1 L331.0,203.6 L331.6,202.9 L332.2,202.2 L332.8,201.9 L333.4,202.2 L334.0,203.0 L334.6,203.8 L335.2,204.1 L335.8,203.8 L336.4,203.1 L337.0,202.4 L337.6,201.9 L338.2,202.1 L338.8,202.7 L339.4,203.5 L340.0,204.0 L340.6,204.0 L341.2,203.4 L341.8,202.6 L342.4,202.0 L343.0,202.0 L343.6,202.5 L344.2,203.3 L344.8,203.9 L345.4,204.1 L346.0,203.6 L346.6,202.9 L347.2,202.2 L347.8,201.9 L348.4,202.2 L349.0,203.0 L349.6,203.8 L350.2,204.1 L350.8,203.8 L351.4,203.1 L352.0,202.4 L352.6,201.9 L353.2,202.1 L353.8,202.7 L354.4,203.5 L355.0,204.0 L355.6,204.0 L356.2,203.4 L356.8,202.6 L357.4,202.0 L358.0,202.0 L358.6,202.5 L359.2,203.3 L359.8,203.9 L360.4,204.1 L361.0,203.6 L361.6,202.9 L362.2,202.2 L362.8,201.9 L363.4,202.2 L364.0,203.0 L364.6,203.8 L365.2,204.1 L365.8,203.8 L366.4,203.1 L367.0,202.4 L367.6,201.9 L368.2,202.1 L368.8,202.7 L369.4,203.5 L370.0,204.0 L370.6,204.0 L371.2,203.4 L371.8,202.6 L372.4,202.0 L373.0,202.0 L373.6,202.5 L374.2,203.3 L374.8,203.9 L375.4,204.1 L376.0,203.6 L376.6,202.9 L377.2,202.2 L377.8,201.9 L378.4,202.2 L379.0,203.0 L379.6,203.8 L380.2,204.1 L380.8,203.8 L381.4,203.1 L382.0,202.4 L382.6,201.9 L383.2,202.1 L383.8,202.7 L384.4,203.5 L385.0,204.0 L385.6,204.0 L386.2,203.4 L386.8,202.6 L387.4,202.0 L388.0,202.0 L388.6,202.5 L389.2,203.3 L389.8,203.9 L390.4,204.1 L391.0,203.6 L391.6,202.9 L392.2,202.2 L392.8,201.9 L393.4,202.2 L394.0,203.0 L394.6,203.8 L395.2,204.1 L395.8,203.8 L396.4,203.1 L397.0,202.4 L397.6,201.9 L398.2,202.1 L398.8,202.7 L399.4,203.5 L400.0,204.0 L400.6,204.0 L401.2,203.4 L401.8,202.6 L402.4,202.0 L403.0,202.0 L403.6,202.5 L404.2,203.3 L404.8,203.9 L405.4,204.1 L406.0,203.6 L406.6,202.9 L407.2,202.2 L407.8,201.9 L408.4,202.2 L409.0,203.0 L409.6,203.8 L410.2,204.1 L410.8,203.8 L411.4,203.1 L412.0,202.4 L412.6,201.9 L413.2,202.1 L413.8,202.7 L414.4,203.5 L415.0,204.0 L415.6,204.0 L416.2,203.4 L416.8,202.6 L417.4,202.0 L418.0,202.0 L418.6,202.5 L419.2,203.3 L419.8,203.9 L420.4,204.1 L421.0,203.6 L421.6,202.9 L422.2,202.2 L422.8,201.9 L423.4,202.2 L424.0,203.0 L424.6,203.8 L425.2,204.1 L425.8,203.8 L426.4,203.1 L427.0,202.4 L427.6,201.9 L428.2,202.1 L428.8,202.7 L429.4,203.5 L430.0,204.0 L430.6,204.0 L431.2,203.4 L431.8,202.6 L432.4,202.0 L433.0,202.0 L433.6,202.5 L434.2,203.3 L434.8,203.9 L435.4,204.1 L436.0,203.6 L436.6,202.9 L437.2,202.2 L437.8,201.9 L438.4,202.2 L439.0,203.0 L439.6,203.8 L440.2,204.1 L440.8,203.8 L441.4,203.1 L442.0,202.4 L442.6,201.9 L443.2,202.1 L443.8,202.7 L444.4,203.5 L445.0,204.0 L445.6,204.0 L446.2,203.4 L446.8,202.6 L447.4,202.0 L448.0,202.0 L448.6,202.5 L449.2,203.3 L449.8,203.9 L450.4,204.1 L451.0,203.6 L451.6,202.9 L452.2,202.2 L452.8,201.9 L453.4,202.2 L454.0,203.0 L454.6,203.8 L455.2,204.1 L455.8,203.8 L456.4,203.1 L457.0,202.4 L457.6,201.9 L458.2,202.1 L458.8,202.7 L459.4,203.5 L460.0,204.0 L460.6,204.0 L461.2,203.4 L461.8,202.6 L462.4,202.0 L463.0,202.0 L463.6,202.5 L464.2,203.3 L464.8,203.9 L465.4,204.1 L466.0,203.6 L466.6,202.9 L467.2,202.2 L467.8,201.9 L468.4,202.2 L469.0,203.0 L469.6,203.8 L470.2,204.1 L470.8,203.8 L471.4,203.1 L472.0,202.4 L472.6,201.9 L473.2,202.1 L473.8,202.7 L474.4,203.5 L475.0,204.0 L475.6,204.0 L476.2,203.4 L476.8,202.6 L477.4,202.0 L478.0,202.0 L478.6,202.5 L479.2,203.3 L479.8,203.9 L480.4,204.1 L481.0,203.6 L481.6,202.9 L482.2,202.2 L482.8,201.9 L483.4,202.2 L484.0,203.0 L484.6,203.8 L485.2,204.1 L485.8,203.8 L486.4,203.1 L487.0,202.4 L487.6,201.9 L488.2,202.1 L488.8,202.7 L489.4,203.5 L490.0,204.0 L490.6,204.0 L491.2,203.4 L491.8,202.6 L492.4,202.0 L493.0,202.0 L493.6,202.5 L494.2,203.3 L494.8,203.9 L495.4,204.1 L496.0,203.6 L496.6,202.9 L497.2,199.0 L497.8,199.0 L498.4,202.2 L499.0,203.0 L499.6,203.8 L500.2,204.1 L500.8,203.8 L501.4,203.1 L502.0,202.4 L502.6,201.9 L503.2,202.1 L503.8,202.7 L504.4,203.5 L505.0,204.0 L505.6,204.0 L506.2,203.4 L506.8,202.6 L507.4,202.0 L508.0,202.0 L508.6,202.5 L509.2,203.3 L509.8,203.9 L510.4,204.1 L511.0,203.6 L511.6,202.9 L512.2,202.2 L512.8,201.9 L513.4,202.2 L514.0,203.0 L514.6,203.8 L515.2,204.1 L515.8,203.8 L516.4,203.1 L517.0,202.4 L517.6,201.9 L518.2,202.1 L518.8,202.7 L519.4,203.5 L520.0,204.0 L520.6,204.0 L521.2,203.4 L521.8,202.6 L522.4,202.0 L523.0,202.0 L523.6,202.5 L524.2,203.3 L524.8,203.9 L525.4,204.1 L526.0,203.6 L526.6,202.9 L527.2,202.2 L527.8,201.9 L528.4,202.2 L529.0,203.0 L529.6,203.8 L530.2,204.1 L530.8,203.8 L531.4,203.1 L532.0,202.4 L532.6,201.9 L533.2,202.1 L533.8,202.7 L534.4,203.5 L535.0,204.0 L535.6,204.0 L536.2,203.4 L536.8,202.6 L537.4,202.0 L538.0,202.0 L538.6,202.5 L539.2,203.3 L539.8,203.9 L540.4,204.1 L541.0,203.6 L541.6,202.9 L542.2,202.2 L542.8,201.9 L543.4,202.2 L544.0,203.0 L544.6,203.8 L545.2,204.1 L545.8,199.5 L546.4,203.1 L547.0,202.4 L547.6,201.9 L548.2,202.1 L548.8,202.7 L549.4,203.5 L550.0,204.0 L550.6,204.0 L551.2,203.4 L551.8,202.6 L552.4,202.0 L553.0,202.0 L553.6,202.5 L554.2,203.3 L554.8,203.9 L555.4,204.1 L556.0,203.6 L556.6,202.9 L557.2,202.2 L557.8,201.9 L558.4,202.2 L559.0,203.0 L559.6,203.8 L560.2,204.1 L560.8,203.8 L561.4,203.1 L562.0,202.4 L562.6,201.9 L563.2,202.1 L563.8,202.7 L564.4,203.5 L565.0,204.0 L565.6,204.0 L566.2,203.4 L566.8,202.6 L567.4,202.0 L568.0,202.0 L568.6,202.5 L569.2,203.3 L569.8,203.9 L570.4,204.1 L571.0,203.6 L571.6,202.9 L572.2,202.2 L572.8,201.9 L573.4,202.2 L574.0,203.0 L574.6,203.8 L575.2,204.1 L575.8,203.8 L576.4,203.1 L577.0,202.4 L577.6,201.9 L578.2,202.1 L578.8,202.7 L579.4,203.5 L580.0,204.0 L580.6,204.0 L581.2,203.4 L581.8,202.6 L582.4,202.0 L583.0,202.0 L583.6,202.5 L584.2,203.3 L584.8,203.9 L585.4,204.1 L586.0,203.6 L586.6,202.9 L587.2,202.2 L587.8,201.9 L588.4,202.2 L589.0,203.0 L589.6,203.8 L590.2,204.1 L590.8,203.8 L591.4,203.1 L592.0,202.4 L592.6,201.9 L593.2,202.1 L593.8,202.7 L594.4,203.5 L595.0,204.0 L595.6,204.0 L596.2,203.4 L596.8,202.6 L597.4,202.0 L598.0,202.0 L598.6,202.5 L599.2,203.3 L599.8,203.9 L600.4,204.1 L601.0,203.6 L601.6,202.9 L602.2,202.2 L602.8,201.9 L603.4,202.2 L604.0,203.0 L604.6,203.8 L605.2,204.1 L605.8,203.8 L606.4,203.1 L607.0,202.4 L607.6,201.9 L608.2,202.1 L608.8,202.7 L609.4,203.5 L610.0,204.0 L610.6,204.0 L611.2,203.4 L611.8,202.6 L612.4,202.0 L613.0,202.0 L613.6,202.5 L614.2,203.3 L614.8,203.9 L615.4,204.1 L616.0,203.6 L616.6,202.9 L617.2,202.2 L617.8,201.9 L618.4,202.2 L619.0,203.0 L619.6,203.8 L620.2,204.1 L620.8,203.8 L621.4,203.1 L622.0,202.4 L622.6,201.9 L623.2,202.1 L623.8,202.7 L624.4,203.5 L625.0,204.0 L625.6,204.0 L626.2,203.4 L626.8,202.6 L627.4,202.0 L628.0,202.0 L628.6,202.5 L629.2,203.3 L629.8,203.9 L630.4,204.1 L631.0,203.6 L631.6,202.9 L632.2,202.2 L632.8,201.9 L633.4,202.2 L634.0,203.0 L634.6,203.8 L635.2,204.1 L635.8,203.8 L636.4,203.1 L637.0,202.4 L637.6,201.9 L638.2,202.1 L638.8,202.7 L639.4,203.5 L640.0,204.0 L640.6,204.0 L641.2,203.4 L641.8,202.6 L642.4,202.0 L643.0,202.0 L643.6,202.5 L644.2,203.3 L644.8,203.9 L645.4,204.1 L646.0,203.6 L646.6,202.9 L647.2,202.2 L647.8,201.9 L648.4,202.2 L649.0,203.0 L649.6,203.8 L650.2,204.1 L650.8,203.8 L651.4,203.1 L652.0,202.4 L652.6,201.9 L653.2,202.1 L653.8,202.7 L654.4,203.5 L655.0,204.0 L655.6,204.0 L656.2,203.4 L656.8,202.6 L657.4,202.0 L658.0,202.0 L658.6,202.5 L659.2,203.3 L659.8,203.9 L660.4,204.1 L661.0,203.6 L661.6,202.9 L662.2,202.2 L662.8,201.9 L663.4,202.2 L664.0,203.0 L664.6,203.8 L665.2,204.1 L665.8,203.8 L666.4,203.1 L667.0,202.4 L667.6,201.9 L668.2,202.1 L668.8,202.7 L669.4,203.5 L670.0,204.0 L670.6,204.0 L671.2,203.4 L671.8,202.6 L672.4,202.0 L673.0,202.0 L673.6,202.5 L674.2,203.3 L674.8,203.9 L675.4,204.1 L676.0,203.6 L676.6,202.9 L677.2,202.2 L677.8,211.5 L678.4,202.2 L679.0,203.0 L679.6,203.8 L680.2,204.1 L680.8,203.8 L681.4,203.1 L682.0,202.4 L682.6,201.9 L683.2,202.1 L683.8,202.7 L684.4,203.5 L685.0,204.0 L685.6,204.0 L686.2,203.4 L686.8,202.6 L687.4,202.0 L688.0,202.0 L688.6,202.5 L689.2,203.3 L689.8,203.9 L690.4,204.1 L691.0,203.6 L691.6,202.9 L692.2,202.2 L692.8,201.9 L693.4,202.2 L694.0,203.0 L694.6,203.8 L695.2,204.1 L695.8,203.8 L696.4,203.1 L697.0,202.4 L697.6,201.9 L698.2,202.1 L698.8,202.7" fill="none" stroke="#222" stroke-width="1"/><path d="M34.0,307.2 L35.0,307.1 L36.0,306.8 L37.0,307.2 L38.0,306.8 L39.0,306.9 L40.0,307.0 L41.0,307.0 L42.0,306.9 L43.0,307.0 L44.0,306.9 L45.0,306.8 L46.0,306.7 L47.0,306.6 L48.0,307.0 L49.0,307.0 L50.0,306.8 L51.0,306.9 L52.0,306.7 L53.0,306.7 L54.0,306.7 L55.0,307.0 L56.0,306.5 L57.0,306.8 L58.0,306.6 L59.0,306.9 L60.0,306.6 L61.0,306.6 L62.0,306.6 L63.0,306.7 L64.0,306.8 L65.0,306.6 L66.0,306.8 L67.0,306.4 L68.0,306.5 L69.0,306.4 L70.0,306.4 L71.0,306.7 L72.0,306.7 L73.0,306.4 L74.0,306.4 L75.0,306.5 L76.0,306.7 L77.0,306.7 L78.0,306.6 L79.0,306.6 L80.0,306.3 L81.0,305.6 L82.0,304.7 L83.0,304.0 L84.0,302.0 L85.0,299.9 L86.0,298.5 L87.0,297.3 L88.0,297.0 L89.0,297.4 L90.0,297.4 L91.0,297.4 L92.0,297.2 L93.0,297.3 L94.0,297.3 L95.0,297.3 L96.0,297.5 L97.0,297.3 L98.0,297.2 L99.0,297.4 L100.0,297.3 L101.0,297.3 L102.0,297.4 L102.9,297.0 L103.9,297.4 L104.9,297.4 L105.9,297.3 L106.9,297.3 L107.9,297.3 L108.9,297.2 L109.9,297.3 L110.9,297.1 L111.9,297.3 L112.9,297.4 L113.9,297.3 L114.9,297.4 L115.9,297.6 L116.9,297.5 L117.9,297.2 L118.9,297.5 L119.9,297.4 L120.9,297.1 L121.9,297.3 L122.9,297.2 L123.9,297.2 L124.9,297.4 L125.9,297.6 L126.9,297.3 L127.9,297.6 L128.9,297.5 L129.9,297.2 L130.9,297.6 L131.9,297.5 L132.9,297.6 L133.9,297.5 L134.8,297.5 L135.8,297.4 L136.8,297.6 L137.8,297.7 L138.8,297.6 L139.8,297.4 L140.8,297.6 L141.8,297.5 L142.8,297.3 L143.8,297.2 L144.8,297.3 L145.8,297.3 L146.8,297.3 L147.8,297.5 L148.8,297.6 L149.8,297.5 L150.9,298.7 L152.0,300.1 L153.0,301.9 L154.0,303.9 L155.0,306.0 L156.0,305.9 L157.0,305.9 L158.0,306.3 L159.0,306.3 L160.0,306.2 L161.0,306.3 L162.0,306.4 L163.0,306.5 L164.0,306.4 L165.0,306.4 L166.0,306.5 L167.0,306.9 L168.0,306.7 L169.0,306.9 L170.0,306.8 L171.0,306.9 L172.0,306.9 L173.0,307.1 L174.0,307.1 L175.0,307.1 L176.0,307.2 L177.0,307.2 L178.0,307.3 L179.0,307.0 L180.0,306.9 L181.0,307.1 L182.0,307.0 L183.0,307.1 L184.0,306.7 L185.0,306.8 L186.0,306.8 L187.0,306.5 L188.0,306.9 L189.0,306.5 L190.0,306.4 L191.0,306.5 L192.0,306.3 L193.0,306.5 L194.0,306.3 L195.0,306.1 L196.0,306.0 L197.0,306.3 L198.0,306.0 L199.0,306.2 L200.0,306.0 L201.0,304.9 L202.0,303.2 L203.0,301.9 L203.9,300.9 L204.8,300.2 L205.7,299.1 L206.6,297.9 L207.6,297.8 L208.6,298.0 L209.7,298.2 L210.7,297.9 L211.7,297.6 L212.7,297.6 L213.8,297.6 L214.8,297.6 L215.8,297.5 L216.8,297.5 L217.8,297.8 L218.9,297.9 L219.9,297.5 L220.9,297.8 L221.9,297.6 L223.0,297.7 L224.0,297.7 L225.0,297.7 L225.5,295.3 L226.0,297.4 L227.0,297.6 L228.0,297.7 L229.0,297.3 L230.0,297.4 L231.0,297.7 L232.0,297.3 L233.0,297.4 L234.0,297.4 L235.0,297.6 L236.0,297.7 L237.0,297.3 L238.0,297.6 L239.0,297.6 L239.9,297.7 L240.9,297.5 L241.9,297.7 L242.9,297.4 L243.9,297.5 L244.9,297.4 L245.9,297.6 L246.9,297.5 L247.9,297.4 L248.9,297.3 L249.9,297.6 L250.9,297.6 L251.9,297.6 L252.9,297.4 L253.9,299.2 L255.0,300.8 L256.0,303.6 L257.0,305.8 L258.0,306.1 L259.0,306.3 L260.0,306.3 L261.0,306.1 L262.0,306.2 L263.0,306.6 L264.0,306.6 L265.0,306.8 L266.0,306.9 L267.0,306.7 L268.0,307.0 L269.0,307.0 L270.0,306.9 L271.0,307.0 L272.0,306.9 L273.0,307.1 L274.0,307.5 L275.0,307.1 L276.0,307.4 L277.0,307.3 L278.0,307.3 L279.0,307.7 L280.0,307.6 L281.0,307.6 L282.0,307.7 L283.0,308.0 L284.0,308.0 L285.0,307.8 L285.9,307.9 L286.9,308.3 L287.9,308.0 L288.8,308.2 L289.8,308.1 L290.8,308.4 L291.8,308.3 L292.7,308.4 L293.7,308.3 L294.7,308.2 L295.6,308.2 L296.6,308.2 L297.6,308.4 L298.5,307.8 L299.5,307.6 L300.5,307.9 L301.4,307.3 L302.4,307.5 L303.4,306.9 L304.4,306.9 L305.3,306.6 L306.3,306.7 L307.3,306.4 L308.2,306.3 L309.2,306.1 L310.1,304.5 L311.1,302.6 L312.0,301.1 L312.9,300.1 L313.8,299.1 L314.7,298.5 L315.6,297.5 L316.6,297.7 L317.6,297.4 L318.6,297.5 L319.6,297.5 L320.6,297.6 L321.6,297.3 L322.7,297.4 L323.7,297.5 L324.7,297.3 L325.7,297.5 L326.7,297.6 L327.7,297.5 L328.7,297.6 L329.7,297.6 L330.7,297.4 L331.7,297.4 L332.7,297.7 L333.7,297.4 L334.8,297.5 L335.8,297.3 L336.8,297.4 L337.8,297.3 L338.8,297.7 L339.8,297.6 L340.8,297.7 L341.8,297.7 L342.8,297.6 L343.8,297.7 L344.8,297.5 L345.8,297.5 L346.9,297.7 L347.9,297.7 L348.9,297.7 L349.9,297.5 L350.9,297.6 L351.9,297.5 L352.9,297.7 L353.9,297.7 L354.9,297.4 L355.9,297.7 L356.9,297.3 L357.9,297.3 L359.0,297.6 L360.0,297.4 L361.0,297.5 L362.0,297.6 L363.0,297.3 L364.0,297.6 L365.0,297.4 L366.0,298.6 L367.0,299.8 L368.0,301.1 L369.1,302.5 L370.2,303.6 L371.3,304.9 L372.4,306.4 L373.4,306.5 L374.4,306.3 L375.4,306.3 L376.4,306.6 L377.4,306.6 L378.4,306.7 L379.4,306.7 L380.4,306.7 L381.4,306.4 L382.4,306.3 L383.4,306.4 L384.4,306.5 L385.4,306.5 L386.4,306.5 L387.4,306.4 L388.4,306.7 L389.4,306.4 L390.4,306.5 L391.4,306.7 L392.4,306.7 L393.4,306.4 L394.4,306.4 L395.5,306.7 L396.5,306.3 L397.5,306.3 L398.5,306.5 L399.5,306.5 L400.5,306.3 L401.5,306.3 L402.5,306.4 L403.5,306.6 L404.5,306.5 L405.5,306.7 L406.5,306.6 L407.5,306.7 L408.5,306.3 L409.5,306.3 L410.5,306.3 L411.5,306.5 L412.5,306.4 L413.5,306.3 L414.5,306.5 L415.5,306.3 L416.5,306.4 L417.8,304.1 L419.0,302.2 L420.0,300.8 L420.9,299.6 L421.9,298.4 L422.9,297.5 L423.9,297.6 L424.9,297.6 L425.9,297.7 L426.9,297.7 L427.9,297.4 L428.9,297.3 L429.9,297.6 L430.9,297.6 L431.9,297.5 L432.9,297.7 L433.9,297.5 L434.9,297.4 L435.9,297.3 L436.9,297.3 L437.9,297.6 L438.9,297.7 L439.9,297.7 L440.9,297.5 L442.0,297.6 L443.0,297.7 L444.0,297.7 L445.0,297.6 L446.0,297.5 L447.0,297.5 L448.0,297.3 L449.0,297.3 L450.0,297.6 L451.0,297.7 L452.0,297.5 L453.0,297.5 L454.0,297.4 L455.0,297.5 L456.0,297.7 L457.0,297.5 L458.0,297.7 L459.0,297.3 L459.5,294.2 L460.0,297.5 L461.0,297.5 L462.0,297.7 L463.0,297.7 L464.0,297.7 L465.0,297.6 L466.0,297.3 L467.0,297.5 L468.0,297.5 L469.0,297.5 L470.0,297.4 L471.0,297.6 L472.0,297.7 L473.0,297.3 L474.0,297.6 L475.0,297.4 L476.0,297.5 L477.0,299.9 L478.0,302.2 L479.1,304.6 L480.3,306.8 L481.3,307.2 L482.3,306.8 L483.2,306.9 L484.2,307.2 L485.2,306.9 L486.2,306.9 L487.2,307.2 L488.2,307.2 L489.1,306.9 L490.1,306.9 L491.1,306.9 L492.1,306.8 L493.1,306.9 L494.1,307.2 L495.0,306.8 L496.0,306.9 L497.0,306.8 L497.5,304.2 L498.0,307.0 L499.0,307.2 L500.0,307.3 L501.0,307.3 L502.0,307.4 L503.0,307.1 L504.0,307.3 L505.0,307.7 L506.0,307.3 L507.0,307.5 L508.0,307.7 L509.0,307.7 L510.0,307.9 L511.0,307.7 L512.0,307.8 L513.0,308.3 L514.0,307.9 L515.0,308.4 L516.0,308.1 L517.0,308.6 L518.0,308.5 L519.0,308.4 L520.0,308.0 L521.0,307.9 L522.0,308.1 L523.0,307.7 L524.0,307.6 L525.0,307.8 L526.0,307.7 L527.0,307.2 L528.0,307.6 L529.0,307.3 L530.0,307.1 L531.0,306.8 L532.0,306.9 L533.0,307.1 L534.0,306.6 L535.0,306.4 L536.0,306.3 L537.0,304.8 L538.0,303.4 L539.0,302.2 L540.1,300.3 L541.3,298.8 L542.4,297.7 L543.2,295.6 L544.0,293.5 L545.0,297.4 L546.0,297.4 L547.0,297.7 L548.0,297.5 L549.0,297.6 L550.0,297.4 L551.0,297.2 L552.0,297.4 L553.0,297.6 L554.0,297.6 L555.0,297.5 L555.9,297.4 L556.9,297.4 L557.9,297.4 L558.9,297.4 L559.9,297.6 L560.9,297.2 L561.9,297.4 L562.9,297.6 L563.9,297.5 L564.9,297.2 L565.9,297.6 L566.9,297.5 L567.9,297.2 L568.9,297.2 L569.9,297.2 L570.9,297.1 L571.9,297.5 L572.9,297.3 L573.9,297.5 L574.9,297.1 L575.9,297.0 L576.8,297.5 L577.8,297.4 L578.8,297.5 L579.8,297.3 L580.8,297.3 L581.8,297.4 L582.8,297.0 L583.8,297.2 L584.8,297.2 L585.8,297.0 L586.8,297.3 L587.9,299.6 L588.9,302.2 L590.0,304.6 L591.1,303.8 L592.1,303.0 L593.2,302.4 L594.3,301.7 L595.3,302.2 L596.2,302.6 L597.2,303.1 L598.2,303.3 L599.1,304.1 L600.1,304.3 L601.1,304.7 L602.0,305.3 L603.0,305.9 L604.0,305.8 L605.0,306.0 L606.0,305.8 L607.0,306.2 L608.1,306.0 L609.1,306.0 L610.1,306.1 L611.1,306.3 L612.1,306.4 L613.1,306.2 L614.1,306.2 L615.1,306.4 L616.1,306.1 L617.2,306.3 L618.2,306.6 L619.2,306.6 L620.2,306.3 L621.2,306.7 L622.2,306.5 L623.2,306.9 L624.2,306.6 L625.2,306.6 L626.3,306.8 L627.3,307.0 L628.3,306.8 L629.3,307.1 L630.3,307.0 L631.3,306.9 L632.3,306.9 L633.3,307.1 L634.3,307.0 L635.4,307.1 L636.4,307.3 L637.4,307.4 L638.4,307.3 L639.4,307.1 L640.3,305.4 L641.1,303.7 L642.0,302.1 L642.9,300.2 L643.9,298.6 L644.8,297.1 L645.8,297.1 L646.8,297.0 L647.8,297.2 L648.8,297.4 L649.8,297.2 L650.8,297.3 L651.8,297.4 L652.8,297.4 L653.9,297.4 L654.9,297.2 L655.9,297.3 L656.9,297.0 L657.9,297.4 L658.9,297.1 L659.9,297.2 L660.9,297.4 L661.9,297.1 L662.9,297.0 L663.9,297.4 L664.9,297.2 L665.9,297.0 L666.9,297.0 L667.9,297.1 L669.0,297.0 L670.0,297.4 L671.0,297.0 L672.0,297.1 L673.0,297.1 L674.0,297.2 L675.0,297.2 L676.0,297.3 L677.0,297.3 L677.6,304.7 L678.2,297.0 L679.2,297.4 L680.2,297.3 L681.2,297.0 L682.1,297.2 L683.1,297.3 L684.1,297.4 L685.1,297.0 L686.1,297.0 L687.1,297.2 L688.1,297.2 L689.1,297.4 L690.0,297.4 L691.0,297.1 L692.0,297.2 L693.0,297.2 L694.0,298.0 L695.0,298.4 L696.0,300.2 L697.0,301.8 L698.0,308.0" fill="none" stroke="#222" stroke-width="1"/><path d="M34.0,399.1 L35.0,398.8 L36.0,399.2 L37.0,399.0 L38.0,399.0 L39.0,398.8 L40.0,398.9 L41.0,399.0 L42.0,399.2 L43.0,399.0 L44.0,398.9 L45.0,399.2 L46.1,399.1 L47.1,399.0 L48.1,398.9 L49.1,398.9 L50.1,399.2 L51.1,398.8 L52.1,399.0 L53.1,399.1 L54.1,398.9 L55.1,399.1 L56.1,399.2 L57.1,399.2 L58.1,399.1 L59.1,398.9 L60.1,398.8 L61.1,399.0 L62.1,398.9 L63.1,398.8 L64.1,399.2 L65.1,398.9 L66.1,399.2 L67.1,399.2 L68.2,398.8 L69.2,399.2 L70.2,398.9 L71.2,398.9 L72.2,398.8 L73.2,398.8 L74.2,399.0 L75.2,398.9 L76.2,399.2 L77.2,399.2 L78.2,398.8 L79.2,399.0 L80.1,397.9 L81.1,396.8 L82.0,395.9 L83.0,393.9 L84.0,392.1 L84.9,391.1 L85.7,390.2 L86.6,389.5 L87.6,389.6 L88.6,389.7 L89.6,389.5 L90.6,389.8 L91.6,389.5 L92.6,389.8 L93.6,389.7 L94.6,389.5 L95.6,389.8 L96.6,389.7 L97.6,389.8 L98.6,389.8 L99.6,389.8 L100.6,389.8 L101.6,389.6 L102.6,390.0 L103.6,390.0 L104.6,389.8 L105.6,389.9 L106.6,389.7 L107.6,390.1 L108.6,390.0 L109.6,389.8 L110.6,390.1 L111.6,390.2 L112.6,389.9 L113.6,390.2 L114.6,390.0 L115.6,389.8 L116.6,390.1 L117.6,389.9 L118.6,390.1 L119.6,390.1 L120.6,389.8 L121.6,390.1 L122.6,390.2 L123.6,390.1 L124.6,390.1 L125.6,390.3 L126.6,390.1 L127.6,390.1 L128.6,390.2 L129.6,390.3 L130.6,390.0 L131.6,390.0 L132.6,390.3 L133.6,390.2 L134.6,390.1 L135.6,390.4 L136.6,390.4 L137.6,390.3 L138.6,390.5 L139.6,390.5 L140.6,390.4 L141.6,390.2 L142.6,390.1 L143.6,390.4 L144.6,390.5 L145.6,390.3 L146.6,390.4 L147.6,390.4 L148.7,391.1 L149.9,392.2 L151.0,393.0 L152.0,394.2 L153.0,395.3 L154.0,396.8 L155.0,397.9 L156.0,398.1 L157.0,397.9 L158.0,398.1 L159.0,398.0 L160.0,398.1 L161.0,398.2 L162.0,398.0 L163.0,398.1 L164.0,398.3 L165.0,398.2 L166.0,398.4 L167.0,398.2 L168.0,398.2 L169.0,398.5 L170.0,398.7 L171.0,398.7 L172.0,398.6 L173.0,398.6 L174.0,398.4 L175.0,398.6 L176.0,398.6 L177.0,399.0 L178.0,398.6 L179.0,399.1 L180.0,398.9 L181.0,398.9 L182.0,398.8 L183.0,399.2 L184.0,398.8 L185.0,399.0 L186.0,399.0 L187.0,398.8 L188.0,398.9 L188.9,399.2 L189.9,399.1 L190.9,399.1 L191.9,399.2 L192.9,398.8 L193.9,399.1 L194.9,399.1 L195.9,398.9 L196.8,399.0 L197.8,399.2 L198.8,398.9 L199.8,399.1 L200.8,398.8 L201.9,397.6 L203.0,395.9 L204.0,394.6 L205.0,393.0 L206.0,391.8 L207.0,390.3 L208.0,390.2 L209.0,390.2 L210.0,390.1 L211.0,390.3 L212.0,390.0 L213.1,390.1 L214.1,390.1 L215.1,390.0 L216.1,389.8 L217.1,389.8 L218.1,390.0 L219.1,389.8 L220.1,390.0 L221.1,389.9 L222.1,390.1 L223.1,390.0 L224.2,389.9 L225.2,389.7 L226.2,389.5 L227.2,389.8 L228.2,389.9 L229.2,389.9 L230.2,389.5 L231.2,389.5 L232.2,389.9 L233.2,389.7 L234.2,389.6 L235.2,389.7 L236.3,389.4 L237.3,389.6 L238.3,389.6 L239.3,389.5 L240.3,389.3 L241.3,389.3 L242.3,389.5 L243.3,389.6 L244.3,389.2 L245.3,389.1 L246.3,389.1 L247.4,389.5 L248.4,389.2 L249.4,389.2 L250.4,389.5 L251.4,389.3 L252.4,389.1 L253.2,390.7 L254.0,391.8 L254.9,393.6 L255.7,395.4 L256.6,396.8 L257.6,397.0 L258.7,397.6 L259.7,397.7 L260.7,398.3 L261.8,398.2 L262.8,398.8 L263.9,398.9 L264.9,399.3 L265.9,399.4 L267.0,399.8 L268.0,399.9 L269.0,399.8 L270.0,399.9 L271.0,400.1 L272.0,399.8 L273.0,399.7 L274.0,399.8 L275.0,399.6 L276.0,399.7 L276.9,399.8 L277.9,399.8 L278.9,399.8 L279.9,399.6 L280.9,399.5 L281.9,399.4 L282.9,399.6 L283.9,399.5 L284.9,399.6 L285.9,399.5 L286.9,399.7 L287.9,399.6 L288.9,399.6 L289.9,399.6 L290.9,399.5 L291.9,399.4 L292.9,399.3 L293.8,399.2 L294.8,399.5 L295.8,399.3 L296.8,399.1 L297.8,399.5 L298.8,399.3 L299.8,399.3 L300.8,399.2 L301.8,399.0 L302.8,399.2 L303.9,398.5 L304.9,398.3 L305.9,398.3 L306.9,397.6 L307.9,397.5 L309.0,397.3 L310.0,396.9 L311.0,395.9 L312.0,394.3 L313.0,392.8 L314.2,391.7 L315.5,390.2 L316.5,390.5 L317.5,390.5 L318.5,390.5 L319.5,390.1 L320.5,390.4 L321.5,390.2 L322.5,390.2 L323.5,390.1 L324.5,390.1 L325.5,390.0 L326.5,390.2 L327.5,390.0 L328.5,390.4 L329.5,389.9 L330.5,390.3 L331.5,389.9 L332.5,389.9 L333.5,390.2 L334.5,390.0 L335.5,390.1 L336.5,390.0 L337.5,390.0 L338.5,389.7 L339.5,390.0 L340.6,389.9 L341.6,390.1 L342.6,389.6 L343.6,389.6 L344.6,389.9 L345.6,390.0 L346.6,389.7 L347.6,389.9 L348.6,389.8 L349.6,389.7 L350.6,389.7 L351.6,389.7 L352.6,389.4 L353.6,389.5 L354.6,389.7 L355.6,389.5 L356.6,389.6 L357.6,389.4 L358.6,389.5 L359.6,389.6 L360.6,389.6 L361.6,389.7 L362.6,389.4 L363.6,389.3 L364.6,389.3 L365.6,389.2 L366.8,391.1 L368.0,393.0 L369.0,394.3 L369.9,395.4 L370.9,396.6 L371.9,397.8 L372.9,397.9 L373.9,398.0 L374.9,397.9 L375.9,398.2 L376.9,398.1 L377.9,398.0 L378.9,398.1 L379.9,397.9 L380.9,398.2 L381.9,398.3 L382.9,398.1 L383.9,398.3 L384.9,398.1 L385.9,398.1 L386.9,398.1 L387.9,398.1 L388.9,398.3 L389.9,398.3 L390.9,398.4 L391.9,398.1 L392.9,398.4 L393.9,398.3 L395.0,398.3 L396.0,398.3 L397.0,398.3 L398.0,398.2 L399.0,398.3 L400.0,398.5 L401.0,398.5 L402.0,398.6 L403.0,398.3 L404.0,398.6 L405.0,398.6 L406.0,398.6 L407.0,398.7 L408.0,398.3 L409.0,398.6 L410.0,398.7 L411.0,398.3 L412.0,398.6 L413.0,398.8 L414.0,398.5 L415.0,398.8 L416.0,398.8 L417.0,397.0 L418.0,395.4 L419.0,393.9 L420.1,392.7 L421.3,391.0 L422.4,389.5 L423.4,389.6 L424.4,389.8 L425.4,389.4 L426.4,389.3 L427.3,389.8 L428.3,389.4 L429.3,389.5 L430.3,389.7 L431.3,389.4 L432.3,389.3 L433.3,389.7 L434.3,389.3 L435.3,389.3 L436.2,389.7 L437.2,389.3 L438.2,389.6 L439.2,389.3 L440.2,389.3 L441.2,389.2 L442.2,389.4 L443.2,389.4 L444.2,389.3 L445.1,389.3 L446.1,389.2 L447.1,389.5 L448.1,389.5 L449.1,389.4 L450.1,389.4 L451.1,389.1 L452.1,389.1 L453.1,389.1 L454.0,389.1 L455.0,389.5 L456.0,389.4 L457.0,389.4 L458.0,389.2 L459.0,393.3 L460.0,389.4 L461.0,389.2 L462.0,389.6 L463.0,389.2 L464.0,389.2 L465.0,389.6 L466.0,389.2 L467.0,389.5 L468.0,389.2 L469.0,389.4 L470.0,389.1 L471.0,389.5 L472.0,389.2 L473.0,389.1 L474.0,389.3 L475.0,389.2 L476.0,390.5 L477.0,391.8 L478.0,393.6 L479.0,395.0 L480.0,397.0 L481.0,398.3 L482.0,398.3 L483.0,398.4 L484.0,398.3 L485.0,398.5 L486.0,398.6 L487.0,398.6 L488.0,398.6 L489.0,398.6 L490.0,398.7 L491.0,398.9 L492.0,398.8 L493.0,399.0 L494.0,398.9 L495.0,398.7 L496.0,398.8 L497.0,399.2 L497.7,395.3 L498.4,398.9 L499.4,399.0 L500.4,399.2 L501.4,398.9 L502.4,398.9 L503.4,398.9 L504.4,398.8 L505.4,399.0 L506.4,399.0 L507.4,399.0 L508.4,399.0 L509.4,399.0 L510.4,399.1 L511.4,398.8 L512.4,399.2 L513.4,398.8 L514.4,399.2 L515.4,398.8 L516.5,399.1 L517.5,398.9 L518.5,398.8 L519.5,399.0 L520.5,399.2 L521.5,399.2 L522.5,399.2 L523.5,399.2 L524.5,398.8 L525.5,398.9 L526.5,398.8 L527.5,399.1 L528.5,399.0 L529.5,399.1 L530.5,399.1 L531.5,399.2 L532.5,399.1 L533.5,399.2 L534.5,399.0 L535.4,398.0 L536.2,397.7 L537.1,396.5 L538.0,395.8 L539.0,394.5 L540.0,392.6 L541.0,391.1 L542.0,389.7 L543.0,388.8 L544.0,388.0 L545.0,388.2 L546.0,388.9 L547.0,389.6 L548.0,389.3 L549.0,389.5 L550.0,389.5 L551.0,389.5 L552.0,389.5 L553.0,389.5 L554.0,389.2 L555.0,389.2 L556.0,389.4 L557.0,389.6 L558.0,389.3 L559.0,389.4 L560.0,389.2 L561.0,389.6 L562.0,389.4 L563.0,389.4 L564.0,389.5 L565.0,389.2 L566.0,389.5 L567.0,389.5 L568.0,389.6 L569.0,389.3 L570.0,389.3 L571.0,389.2 L572.0,389.6 L573.0,389.4 L574.0,389.3 L575.0,389.4 L576.0,389.5 L577.0,389.3 L578.0,389.3 L579.0,389.5 L580.0,389.5 L581.0,389.3 L582.0,389.2 L583.0,389.6 L584.0,389.5 L585.0,389.4 L586.0,390.6 L587.0,392.0 L588.0,393.0 L589.0,394.9 L590.0,396.8 L590.9,396.3 L591.8,395.9 L592.8,395.1 L593.7,394.8 L594.6,394.1 L595.5,393.4 L596.5,394.0 L597.6,394.5 L598.6,395.0 L599.7,395.5 L600.8,396.0 L601.8,396.5 L602.9,397.2 L603.9,397.4 L605.0,398.2 L606.0,398.5 L607.0,398.8 L608.0,398.4 L609.0,398.6 L610.0,398.6 L611.0,398.7 L611.9,398.5 L612.9,398.5 L613.9,398.4 L614.9,398.6 L615.9,398.6 L616.9,398.4 L617.9,398.4 L618.9,398.4 L619.9,398.8 L620.9,398.6 L621.9,398.6 L622.8,398.5 L623.8,398.7 L624.8,398.8 L625.8,398.7 L626.8,398.4 L627.8,398.6 L628.8,398.6 L629.8,398.4 L630.8,398.7 L631.8,398.5 L632.8,398.5 L633.7,398.7 L634.7,398.6 L635.7,398.6 L636.7,398.8 L637.7,398.6 L638.7,398.5 L639.8,396.8 L640.9,395.6 L642.0,393.9 L643.1,393.1 L644.1,392.0 L645.2,390.9 L646.3,390.0 L647.3,390.0 L648.3,390.0 L649.3,390.4 L650.3,390.2 L651.3,390.1 L652.2,390.3 L653.2,390.3 L654.2,390.0 L655.2,390.3 L656.2,390.1 L657.2,390.4 L658.2,390.0 L659.2,390.1 L660.2,390.1 L661.2,390.4 L662.1,390.4 L663.1,390.2 L664.1,390.0 L665.1,390.2 L666.1,390.3 L667.1,390.0 L668.1,390.4 L669.1,390.4 L670.1,390.4 L671.1,390.3 L672.0,390.3 L673.0,390.4 L674.0,390.1 L675.0,390.1 L676.0,390.0 L677.0,390.0 L677.4,393.7 L678.0,390.0 L679.0,390.3 L680.0,390.1 L680.9,390.4 L681.9,390.3 L682.9,390.3 L683.9,390.4 L684.9,390.0 L685.8,390.1 L686.8,390.1 L687.8,390.2 L688.8,390.3 L689.7,390.4 L690.7,390.3 L691.7,390.4 L692.8,390.9 L693.9,391.3 L695.0,392.0 L696.0,393.6 L697.0,395.2 L697.8,396.9 L698.5,399.0" fill="none" stroke="#222" stroke-width="1"/>
<path d="M35 447L38 452" stroke="#d04040" stroke-width="1"/>
</svg>
<div class="abs" style="left:690px;top:442px;font-size:11px;line-height:13px;color:#3a3a3a;">B</div>
</body></html>
